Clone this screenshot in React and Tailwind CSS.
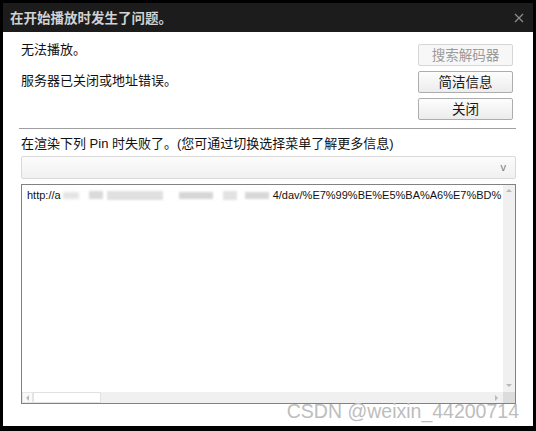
const cjk = { fontFamily: '"Noto Sans CJK SC", "Liberation Sans", sans-serif' };
const latin = { fontFamily: '"Liberation Sans", Arial, sans-serif' };
const mixed = { fontFamily: '"Liberation Sans", "Noto Sans CJK SC", sans-serif' };

const Button = ({ children, disabled }) => (
  <button
    type="button"
    disabled={disabled}
    className={
      disabled
        ? "h-[22px] w-[95px] rounded-[2px] border border-[#d6d6d6] bg-[#f7f7f7] text-[13.5px] leading-none text-[#9a9a9a]"
        : "h-[22px] w-[95px] rounded-[2px] border border-[#adadad] bg-gradient-to-b from-[#fdfdfd] to-[#ececec] text-[13.5px] leading-none text-[#1a1a1a]"
    }
  >
    {children}
  </button>
);

const Arrow = ({ dir }) => {
  const pts = {
    up: "1,5 4,2 7,5",
    down: "1,2 4,5 7,2",
    left: "5,1 2,4 5,7",
    right: "2,1 5,4 2,7",
  }[dir];
  return (
    <svg width="8" height="8" viewBox="0 0 8 8">
      <polygon points={pts} fill="#b8b8b8" />
    </svg>
  );
};

export default function App() {
  return (
    <div
      className="relative flex h-[431px] w-[536px] flex-col bg-black pb-[5px] pl-[3px] pr-[3px] pt-[3px]"
      style={cjk}
    >
      {/* title bar */}
      <div className="flex h-[29px] items-center justify-between bg-[#1c1c1c] pl-[7px] pr-[9px]">
        <span className="text-[13.5px] font-semibold text-[#d2d2d2]">在开始播放时发生了问题。</span>
        <svg width="10" height="10" viewBox="0 0 10 10">
          <path d="M1 1 L9 9 M9 1 L1 9" stroke="#8c8c8c" strokeWidth="1.3" />
        </svg>
      </div>

      <div className="flex flex-1 flex-col bg-white pt-[8px]">
        <div className="flex justify-between pl-[18px] pr-[20px]">
          <div className="flex flex-col gap-[13px] text-[13px] leading-[18px] text-[#111]">
            <p>无法播放。</p>
            <p>服务器已关闭或地址错误。</p>
          </div>
          <div className="mt-[4px] flex flex-col gap-[5px]">
            <Button disabled>搜索解码器</Button>
            <Button>简洁信息</Button>
            <Button>关闭</Button>
          </div>
        </div>

        <div className="ml-[16px] mr-[17px] mt-[8px] h-px bg-[#a0a0a0]" />

        <p className="ml-[18px] mt-[6px] text-[13px] leading-[18px] text-[#111]" style={mixed}>
          在渲染下列 Pin 时失败了。(您可通过切换选择菜单了解更多信息)
        </p>

        <div className="ml-[18px] mr-[17px] mt-[3px] flex h-[23px] items-center justify-end rounded-[2px] border border-[#d9d9d9] bg-gradient-to-b from-[#fcfcfc] to-[#f0f0f0] pr-[9px]">
          <span className="text-[11px] text-[#7a7a7a]" style={latin}>v</span>
        </div>

        <div className="ml-[18px] mr-[17px] mt-[5px] flex h-[220px] flex-col border border-[#828282]">
          <div className="flex flex-1">
            <div className="flex-1 overflow-hidden pl-[5px] pt-[3px]">
              <div className="flex items-center whitespace-nowrap text-[11px] leading-[14px] text-[#111]" style={latin}>
                <span>http://a</span>
                <span className="flex h-[12px] w-[212px] items-center">
                  <span className="ml-[2px] h-[7px] w-[16px] bg-[#e4e4e4] blur-[1.5px]" />
                  <span className="ml-[10px] h-[8px] w-[14px] bg-[#dadada] blur-[1px]" />
                  <span className="ml-[4px] h-[9px] w-[56px] bg-[#e0e0e0] blur-[1px]" />
                  <span className="ml-[16px] h-[7px] w-[34px] bg-[#d6d6d6] blur-[1px]" />
                  <span className="ml-[10px] h-[9px] w-[14px] bg-[#e2e2e2] blur-[1px]" />
                  <span className="ml-[8px] h-[7px] w-[24px] bg-[#d8d8d8] blur-[1px]" />
                </span>
                <span>4/dav/%E7%99%BE%E5%BA%A6%E7%BD%</span>
              </div>
            </div>
            <div className="flex w-[12px] flex-col items-center justify-between bg-[#f0f0f0] py-[2px]">
              <Arrow dir="up" />
              <Arrow dir="down" />
            </div>
          </div>
          <div className="flex h-[11px]">
            <div className="flex flex-1 items-center bg-[#f0f0f0]">
              <div className="flex h-[11px] w-[11px] items-center justify-center border border-[#e6e6e6] bg-[#fafafa]">
                <Arrow dir="left" />
              </div>
              <div className="h-[11px] w-[68px] border border-[#e2e2e2] bg-white" />
              <div className="flex-1" />
              <div className="mr-[1px] flex h-[11px] w-[11px] items-center justify-center">
                <Arrow dir="right" />
              </div>
            </div>
            <div className="w-[12px] bg-[#dcdcdc]" />
          </div>
        </div>
      </div>

      <span
        className="absolute right-[17px] top-[400px] text-[19.5px] leading-[22px] text-[#bdbdbd]"
        style={latin}
      >
        CSDN @weixin_44200714
      </span>
    </div>
  );
}
